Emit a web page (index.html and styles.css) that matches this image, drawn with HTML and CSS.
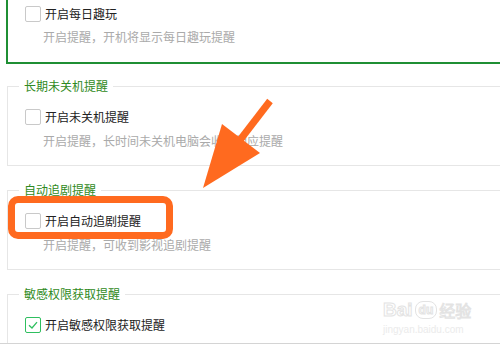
FILE: index.html
```html
<!DOCTYPE html>
<html lang="zh-CN">
  <head>
    <meta charset="UTF-8" />
    <meta name="viewport" content="width=device-width, initial-scale=1.0" />
    <title>提醒设置</title>
    <link rel="stylesheet" href="styles.css">
  </head>
  <body>
    <div class="page">
      <div class="panel panel-active">
        <label class="row">
          <span class="check"></span>
          <span class="label">开启每日趣玩</span>
        </label>
        <div class="desc">开启提醒，开机将显示每日趣玩提醒</div>
      </div>

      <fieldset class="group">
        <legend>长期未关机提醒</legend>
        <label class="row">
          <span class="check"></span>
          <span class="label">开启未关机提醒</span>
        </label>
        <div class="desc">开启提醒，长时间未关机电脑会收到相应提醒</div>
      </fieldset>

      <fieldset class="group">
        <legend>自动追剧提醒</legend>
        <label class="row">
          <span class="check"></span>
          <span class="label">开启自动追剧提醒</span>
        </label>
        <div class="desc">开启提醒，可收到影视追剧提醒</div>
      </fieldset>

      <fieldset class="group">
        <legend>敏感权限获取提醒</legend>
        <label class="row">
          <span class="check checked">
            <svg viewBox="0 0 14 14" width="14" height="14">
              <path d="M3 7.2 L6 10 L11 4.2" fill="none" stroke="#2fbf5f" stroke-width="1.3" />
            </svg>
          </span>
          <span class="label">开启敏感权限获取提醒</span>
        </label>
        <div class="desc">开启提醒，有软件获取敏感权限时将发出提醒</div>
      </fieldset>

      <!-- annotation on top of the screenshot -->
      <div class="highlight"></div>
      <svg class="arrow" width="500" height="350" viewBox="0 0 500 350">
        <line x1="270" y1="101" x2="240" y2="140" stroke="#ff6a1f" stroke-width="7" />
        <polygon points="222,124 260,153 203,188" fill="#ff6a1f" />
      </svg>

      <div class="watermark">
        <div class="wm-logo">
          <span>Bai</span><span class="wm-du">du</span><span class="wm-cn">经验</span>
        </div>
        <div class="wm-url">jingyan.baidu.com</div>
      </div>
    </div>
  </body>
</html>
```

FILE: styles.css
```css
body {
  margin: 0;
  background-color: white;
  font-family: "Noto Sans CJK SC", "Microsoft YaHei", sans-serif;
  font-size: 12px;
  overflow: hidden;
}

.page {
  position: relative;
  height: 343px;
  padding-left: 6px;
  overflow: hidden;
  border-bottom: 1px solid #d4d4d4;
}

.panel {
  margin-right: -20px;
  padding: 6px 0 17px 17px;
}

.panel-active {
  border-left: 2px solid #1f8f34;
  border-bottom: 2px solid #1f8f34;
}

.group {
  margin: 14px -20px 0 1px;
  padding: 15px 0 16px 17px;
  border: 1px solid #e6e6e6;
  border-right: none;
}

.group + .group {
  margin-top: 16px;
}

.group legend {
  margin-left: -6px;
  padding: 0 5px;
  line-height: 16px;
  color: #2f8a22;
}

.row {
  display: flex;
  align-items: center;
  gap: 4px;
  height: 16px;
  line-height: 16px;
  color: #222;
}

.check {
  display: inline-flex;
  align-items: center;
  justify-content: center;
  width: 14px;
  height: 14px;
  border: 1px solid #c9c9c9;
  border-radius: 2px;
  background-color: white;
}

.check.checked {
  border-color: #2fbf5f;
}

.desc {
  margin-top: 7px;
  padding-left: 18px;
  line-height: 16px;
  color: #aaa;
}

.group .desc {
  margin-top: 8px;
}

.highlight {
  position: absolute;
  left: 8px;
  top: 196px;
  width: 151px;
  height: 29px;
  border: 7px solid #ff6a1f;
  border-radius: 10px;
}

.arrow {
  position: absolute;
  left: 0;
  top: 0;
  pointer-events: none;
}

.watermark {
  position: absolute;
  left: 383px;
  top: 298px;
  color: white;
  font-family: "Liberation Sans", sans-serif;
  -webkit-text-stroke: 1px #e3e3e3;
}

.wm-logo {
  display: flex;
  align-items: center;
  gap: 2px;
  font-size: 19px;
  font-weight: bold;
  line-height: 24px;
}

.wm-du {
  display: inline-block;
  padding: 0 3px;
  font-size: 12px;
  line-height: 16px;
  border: 1px solid #e3e3e3;
  border-radius: 8px;
}

.wm-cn {
  font-family: "Noto Sans CJK SC", sans-serif;
  font-size: 16px;
  font-weight: normal;
}

.wm-url {
  margin-top: 2px;
  font-size: 10px;
  line-height: 12px;
  -webkit-text-stroke: 0;
  color: #ebebeb;
}
```
